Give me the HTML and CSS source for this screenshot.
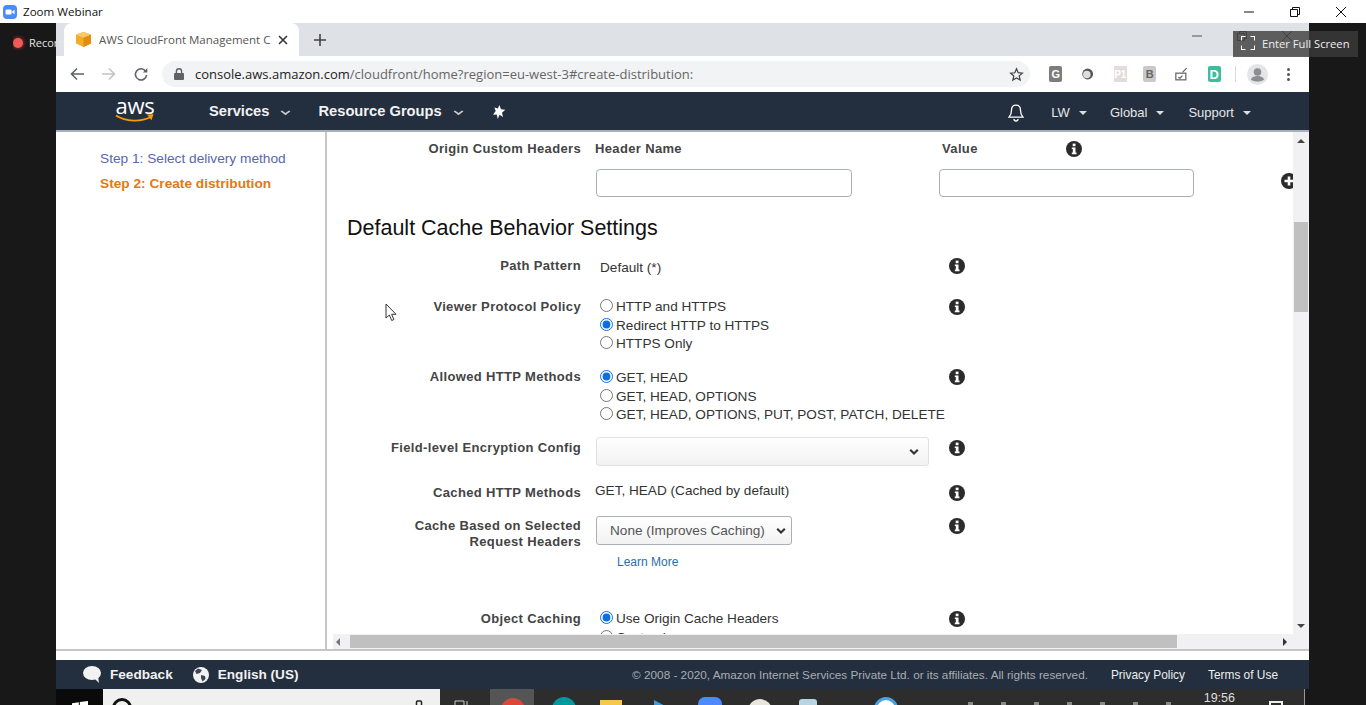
FILE: index.html
```html
<!DOCTYPE html>
<html lang="en">
<head>
  <meta charset="UTF-8" />
  <title>Zoom Webinar</title>
  <link rel="stylesheet" href="styles.css">
</head>
<body>
  <svg class="defs" width="0" height="0">
    <symbol id="info" viewBox="0 0 16 16">
      <circle cx="8" cy="8" r="8" fill="#2b2b2b"/>
      <rect x="6.7" y="2.6" width="2.8" height="2.6" fill="#fff"/>
      <path d="M5.8 6.4h3.7v5.2h1v1.6H5.8v-1.6h1V8h-1z" fill="#fff"/>
    </symbol>
    <symbol id="chev" viewBox="0 0 10 8">
      <path d="M1.2 1.8 5 5.6l3.8-3.8" fill="none" stroke="#333" stroke-width="2.1"/>
    </symbol>
  </svg>

  <header class="titlebar">
    <svg class="zoom-logo" width="14" height="14" viewBox="0 0 14 14"><rect width="14" height="14" rx="4" fill="#4a8cff"/><rect x="2.6" y="4.4" width="6" height="5.2" rx="1.2" fill="#fff"/><path d="m9.2 6.4 2.4-1.6v4.4L9.2 7.6z" fill="#fff"/></svg>
    <span class="titlebar-name">Zoom Webinar</span>
    <div class="winctl">
      <svg width="12" height="12" viewBox="0 0 12 12"><path d="M1 6h10" stroke="#111"/></svg>
      <svg width="12" height="12" viewBox="0 0 12 12"><path d="M1.5 3.5h7v7h-7zM3.5 3.5v-2h7v7h-2" fill="none" stroke="#111"/></svg>
      <svg width="12" height="12" viewBox="0 0 12 12"><path d="m1 1 10 10M11 1 1 11" stroke="#111"/></svg>
    </div>
  </header>

  <div class="desk">
    <div class="browser">
      <div class="tabstrip">
        <div class="tab">
          <svg width="15" height="15" viewBox="0 0 15 15"><path d="M7.5 0 15 2.6v9L7.5 15 0 11.6v-9z" fill="#f2ad2e"/><path d="M7.5 5.4 15 2.6v9L7.5 15z" fill="#e08e12"/><path d="M7.5 0 15 2.6 7.5 5.4 0 2.6z" fill="#f8cb6a"/></svg>
          <span class="tab-title">AWS CloudFront Management C</span>
          <svg class="tab-close" width="10" height="10" viewBox="0 0 10 10"><path d="m1 1 8 8M9 1 1 9" stroke="#333" stroke-width="1.6"/></svg>
        </div>
        <svg class="tab-new" width="12" height="12" viewBox="0 0 12 12"><path d="M6 0v12M0 6h12" stroke="#444" stroke-width="1.6"/></svg>
        <div class="strip-ctl">
          <svg width="10" height="10" viewBox="0 0 10 10"><path d="M0 5h10" stroke="#555"/></svg>
          <svg width="10" height="10" viewBox="0 0 10 10"><path d="M.5 2.5h7v7h-7zM2.5 2.5v-2h7v7h-2" fill="none" stroke="#555"/></svg>
          <svg width="10" height="10" viewBox="0 0 10 10"><path d="m0 0 10 10M10 0 0 10" stroke="#555"/></svg>
        </div>
      </div>

      <div class="toolbar">
        <svg class="tool-back" width="14" height="14" viewBox="0 0 14 14"><path d="M14 7H1.5M7 1.5 1.5 7 7 12.5" fill="none" stroke="#5f6368" stroke-width="1.6"/></svg>
        <svg class="tool-fwd" width="14" height="14" viewBox="0 0 14 14"><path d="M0 7h12.5M7 1.5 12.5 7 7 12.5" fill="none" stroke="#c2c4c7" stroke-width="1.6"/></svg>
        <svg class="tool-reload" width="14" height="14" viewBox="0 0 14 14"><path d="M11.8 4.4A5.6 5.6 0 1 0 12.6 8" fill="none" stroke="#5f6368" stroke-width="1.6"/><path d="M13.4 1v4.6H8.8z" fill="#5f6368"/></svg>
        <div class="omnibox">
          <svg width="10" height="12" viewBox="0 0 10 12"><rect y="5" width="10" height="7" rx="1" fill="#5f6368"/><path d="M2.4 5.5V3.4a2.6 2.6 0 0 1 5.2 0v2.1" fill="none" stroke="#5f6368" stroke-width="1.4"/></svg>
          <span class="url"><span class="url-host">console.aws.amazon.com</span>/cloudfront/home?region=eu-west-3#create-distribution:</span>
          <svg class="url-star" width="15" height="15" viewBox="0 0 24 24"><path d="m12 3 2.7 6.100 6.600.7-5 4.400 1.500 6.500L12 17.400l-5.800 3.400 1.500-6.500-5-4.400 6.600-.7z" fill="none" stroke="#444" stroke-width="2"/></svg>
        </div>
        <div class="exts">
          <span class="ext ext-g">G</span>
          <svg width="16" height="16" viewBox="0 0 16 16"><circle cx="8" cy="8" r="6.500" fill="#555"/><circle cx="7" cy="8.500" r="4.500" fill="#ddd"/></svg>
          <span class="ext ext-p">P1</span>
          <span class="ext ext-b">B</span>
          <svg width="16" height="16" viewBox="0 0 16 16"><rect x="1" y="7" width="12" height="8" fill="none" stroke="#666" stroke-width="1.500"/><path d="m4 12 2 1 3-3M9 6l5-5" fill="none" stroke="#666" stroke-width="1.500"/></svg>
          <span class="ext ext-d">D</span>
        </div>
        <span class="tool-sep"></span>
        <svg class="avatar" width="21" height="21" viewBox="0 0 21 21"><circle cx="10.500" cy="10.500" r="10.500" fill="#e4e5e7"/><circle cx="10.500" cy="8" r="3.800" fill="#8b8d90"/><path d="M3.800 15.500c1-2.800 4-3.600 6.700-3.600s5.700.8 6.700 3.600c-3.400 2.800-10 2.800-13.400 0z" fill="#8b8d90"/></svg>
        <div class="kebab"><i></i><i></i><i></i></div>
      </div>

      <nav class="awsnav">
        <div class="awslogo">
          <span class="awslogo-text">aws</span>
          <svg width="40" height="9" viewBox="0 0 40 9"><path d="M1 1.500c10 6.500 25 6.500 35 1.500" fill="none" stroke="#f90" stroke-width="1.800"/><path d="m32 .6 6.500-.4-2 6z" fill="#f90"/></svg>
        </div>
        <span class="nav-main nav-services">Services</span><span class="caret-main"></span>
        <span class="nav-main nav-groups">Resource Groups</span><span class="caret-main"></span>
        <svg class="nav-pin" width="14" height="14" viewBox="0 0 14 14"><path d="M7.400 0 9 4.300l4.300.5L10 7.700l1 4.300-3.500-2.300L5.800 14 4.700 9.500 1 9.700l2.700-3.600L2.400 2.600l3.500 1z" fill="#fff"/></svg>
        <svg class="nav-bell" width="16" height="18" viewBox="0 0 16 18"><path d="M8 1.200c-3 0-4.500 2.300-4.500 5 0 3.800-1 5.300-2.500 7h14c-1.500-1.700-2.500-3.200-2.500-7 0-2.700-1.500-5-4.500-5zM6 15a2 2 0 0 0 4 0" fill="none" stroke="#fff" stroke-width="1.300"/></svg>
        <span class="nav-sub nav-lw">LW</span><span class="caret caret-lw"></span>
        <span class="nav-sub nav-global">Global</span><span class="caret caret-global"></span>
        <span class="nav-sub nav-support">Support</span><span class="caret"></span>
      </nav>

      <div class="workspace">
        <aside class="steps">
          <a class="step">Step 1: Select delivery method</a>
          <a class="step step-on">Step 2: Create distribution</a>
        </aside>
        <div class="pane">
          <main class="scroller">
            <div class="origin-row">
              <div class="lbl">Origin Custom Headers</div>
              <div class="origin-col">
                <div class="origin-head">Header Name</div>
                <div class="textbox"></div>
              </div>
              <div class="origin-col origin-col-val">
                <div class="origin-head origin-head-val">Value <svg class="ico"><use href="#info"/></svg></div>
                <div class="textbox"></div>
              </div>
              <svg class="plus" width="16" height="16" viewBox="0 0 16 16"><circle cx="8" cy="8" r="8" fill="#2b2b2b"/><path d="M8 3.500v9M3.500 8h9" stroke="#fff" stroke-width="2.600"/></svg>
            </div>

            <h2>Default Cache Behavior Settings</h2>

            <div class="row row-path">
              <div class="lbl">Path Pattern</div>
              <div class="val val-path">Default (*)</div>
              <svg class="ico"><use href="#info"/></svg>
            </div>
            <div class="row row-viewer">
              <div class="lbl">Viewer Protocol Policy</div>
              <div class="val radios">
                <label><input type="radio" name="viewer">HTTP and HTTPS</label>
                <label><input type="radio" name="viewer" checked>Redirect HTTP to HTTPS</label>
                <label><input type="radio" name="viewer">HTTPS Only</label>
              </div>
              <svg class="ico"><use href="#info"/></svg>
            </div>
            <div class="row row-allowed">
              <div class="lbl">Allowed HTTP Methods</div>
              <div class="val radios">
                <label><input type="radio" name="allowed" checked>GET, HEAD</label>
                <label><input type="radio" name="allowed">GET, HEAD, OPTIONS</label>
                <label><input type="radio" name="allowed">GET, HEAD, OPTIONS, PUT, POST, PATCH, DELETE</label>
              </div>
              <svg class="ico"><use href="#info"/></svg>
            </div>
            <div class="row row-field">
              <div class="lbl">Field-level Encryption Config</div>
              <div class="val"><div class="select select-wide"><svg width="10" height="8"><use href="#chev"/></svg></div></div>
              <svg class="ico"><use href="#info"/></svg>
            </div>
            <div class="row row-cached">
              <div class="lbl">Cached HTTP Methods</div>
              <div class="val val-cached">GET, HEAD (Cached by default)</div>
              <svg class="ico"><use href="#info"/></svg>
            </div>
            <div class="row row-headers">
              <div class="lbl">Cache Based on Selected<br>Request Headers</div>
              <div class="val">
                <div class="select select-btn">None (Improves Caching)<svg width="10" height="8"><use href="#chev"/></svg></div>
                <a class="learn">Learn More</a>
              </div>
              <svg class="ico"><use href="#info"/></svg>
            </div>
            <div class="row row-object">
              <div class="lbl">Object Caching</div>
              <div class="val radios">
                <label><input type="radio" name="object" checked>Use Origin Cache Headers</label>
                <label><input type="radio" name="object">Customize</label>
              </div>
              <svg class="ico"><use href="#info"/></svg>
            </div>
          </main>
          <div class="vbar">
            <span class="arrow-up"></span>
            <span class="vbar-thumb"></span>
            <span class="arrow-down"></span>
          </div>
          <div class="hbar">
            <span class="arrow-left"></span>
            <span class="hbar-thumb"></span>
            <span class="arrow-right"></span>
          </div>
          <div class="corner"></div>
        </div>
      </div>

      <footer class="awsfoot">
        <svg class="foot-bubble" width="18" height="17" viewBox="0 0 18 17"><ellipse cx="9" cy="7" rx="9" ry="7" fill="#f2f2f2"/><path d="m11 12 5 5-1-7z" fill="#f2f2f2"/></svg>
        <span class="foot-strong">Feedback</span>
        <svg class="foot-globe" width="16" height="16" viewBox="0 0 16 16"><circle cx="8" cy="8" r="8" fill="#f2f2f2"/><path d="M5 1.500 9 3 7 6 3.500 7 2 4zM8 8l4 1 .5 3-3 2.500L8 11z" fill="#39465a"/></svg>
        <span class="foot-strong">English (US)</span>
        <span class="foot-copy">© 2008 - 2020, Amazon Internet Services Private Ltd. or its affiliates. All rights reserved.</span>
        <a class="foot-link">Privacy Policy</a>
        <a class="foot-link foot-terms">Terms of Use</a>
      </footer>

      <div class="taskbar">
        <div class="startbtn"><svg width="16" height="16" viewBox="0 0 16 16"><path d="M0 2.200 6.800 1.200V7.600H0zM7.800 1 16 0V7.600H7.800z" fill="#fff"/></svg></div>
        <div class="searchbox">
          <span class="search-ring"></span>
          <span class="search-hint">Type here to search</span>
          <svg class="search-mic" width="8" height="14" viewBox="0 0 8 14"><rect x="1.500" y="1" width="5" height="9" rx="1" fill="none" stroke="#222" stroke-width="1.500"/></svg>
        </div>
        <svg class="task-view" width="16" height="14" viewBox="0 0 16 14"><path d="M1 1h9v10H1zM13 1v10" fill="none" stroke="#ccc"/></svg>
        <div class="task-on"><span class="dot dot-chrome"></span></div>
        <span class="dot dot-teal"></span>
        <span class="folder"></span>
        <svg class="play" width="18" height="16" viewBox="0 0 18 16"><path d="M1 0 18 9 1 16z" fill="#3d9be0"/></svg>
        <span class="dot dot-zoom"></span>
        <span class="dot dot-paint"></span>
        <span class="dot dot-file"></span>
        <span class="dot dot-net"></span>
        <div class="tray">
          <div class="tray-glyphs"><i></i><i></i><i></i><i></i><i></i><i></i><i></i></div>
          <span class="tray-time">19:56</span>
          <span class="tray-note"></span>
        </div>
      </div>
    </div>
  </div>

  <div class="rec"><span class="rec-dot"></span>Recording</div>
  <div class="fullscreen">
    <svg width="14" height="14" viewBox="0 0 14 14"><path d="M0 4.500V0h4.500M9.500 0H14v4.500M14 9.500V14H9.500M4.500 14H0V9.500" fill="none" stroke="#fff" stroke-width="2"/></svg>
    Enter Full Screen
  </div>
  <svg class="cursor" width="13" height="19" viewBox="0 0 13 19"><path d="M1 1v14l3.400-3 2.300 5.500 2.200-1-2.300-5.200H11z" fill="#fff" stroke="#333"/></svg>
</body>
</html>
```

FILE: styles.css
```css
* {
  box-sizing: border-box;
}
html, body {
  margin: 0;
  height: 705px;
  overflow: hidden;
}
body {
  position: relative;
  background: #181818;
  font-family: "Liberation Sans", Arial, sans-serif;
  font-size: 14px;
  color: #333;
}
.defs {
  position: absolute;
}

/* zoom window */
.titlebar {
  height: 23px;
  background: #fff;
  display: flex;
  align-items: center;
  padding-left: 3px;
  color: #111;
}
.titlebar-name {
  margin-left: 6px;
  font-family: "Open Sans", sans-serif;
  font-size: 11.600px;
}
.winctl {
  margin-left: auto;
  margin-right: 19px;
  display: flex;
  gap: 34px;
}
.desk {
  height: 682px;
  padding-left: 56px;
}
.browser {
  width: 1253px;
  height: 682px;
  display: flex;
  flex-direction: column;
}

/* chrome */
.tabstrip {
  height: 33px;
  background: #dee1e6;
  display: flex;
  align-items: center;
  padding-left: 8px;
}
.tab {
  width: 235px;
  height: 33px;
  background: #fff;
  border-radius: 8px 8px 0 0;
  display: flex;
  align-items: center;
  padding-left: 12px;
}
.tab-title {
  width: 172px;
  margin-left: 8px;
  overflow: hidden;
  white-space: nowrap;
  font-family: "Open Sans", sans-serif;
  font-size: 11.500px;
  color: #555;
}
.tab-close {
  margin-left: 7px;
}
.tab-new {
  margin-left: 15px;
}
.strip-ctl {
  margin-left: auto;
  margin-right: 17px;
  margin-top: -8px;
  display: flex;
  gap: 35px;
}
.toolbar {
  height: 36px;
  background: #fff;
  display: flex;
  align-items: center;
  padding-left: 14px;
}
.tool-fwd {
  margin-left: 18px;
}
.tool-reload {
  margin-left: 18px;
}
.omnibox {
  width: 868px;
  height: 26px;
  margin-left: 14px;
  background: #f1f3f4;
  border-radius: 13px;
  display: flex;
  align-items: center;
  padding-left: 12px;
}
.url {
  margin-left: 11px;
  font-family: "Open Sans", sans-serif;
  font-size: 13px;
  color: #666;
  white-space: nowrap;
}
.url-host {
  color: #222;
}
.url-star {
  margin-left: auto;
  margin-right: 6px;
}
.exts {
  margin-left: 19px;
  display: flex;
  align-items: center;
  gap: 16px;
  width: 172px;
}
.exts svg {
  margin: 0 3px;
}
.ext {
  width: 16px;
  height: 16px;
  display: grid;
  place-items: center;
  font-size: 11px;
  font-weight: bold;
  color: #fff;
}
.ext-g {
  background: #7d7d7d;
  border-radius: 2px;
}
.ext-p {
  background: #e3dcdc;
  font-size: 10px;
}
.ext-b {
  background: #c9c9c9;
  color: #666;
  border-radius: 2px;
}
.ext-d {
  background: #3cbd9d;
  border-radius: 2px;
  font-size: 13px;
}
.tool-sep {
  width: 1px;
  height: 16px;
  background: #dcdcdc;
  margin-left: 14px;
}
.avatar {
  margin-left: 11px;
}
.kebab {
  margin-left: 19px;
  display: flex;
  flex-direction: column;
  gap: 2px;
}
.kebab i {
  width: 3px;
  height: 3px;
  background: #555;
  border-radius: 50%;
}

/* aws nav */
.awsnav {
  height: 40px;
  background: #232f3e;
  border-bottom: 2px solid #aab0b7;
  display: flex;
  align-items: center;
  color: #fff;
}
.awslogo {
  width: 40px;
  margin-left: 59px;
  display: flex;
  flex-direction: column;
  align-items: center;
  margin-top: -3px;
}
.awslogo-text {
  font-family: "Open Sans", sans-serif;
  font-size: 22px;
  line-height: 18px;
  letter-spacing: -.3px;
}
.nav-main {
  font-size: 14.700px;
  font-weight: bold;
  color: #f2f2f2;
}
.nav-services {
  margin-left: 54px;
}
.nav-groups {
  margin-left: 29px;
}
.caret-main {
  width: 7px;
  height: 7px;
  margin-left: 13px;
  margin-top: 1px;
  border-right: 2px solid #ccc;
  border-bottom: 2px solid #ccc;
  transform: scaleY(.7) rotate(45deg);
}
.nav-pin {
  margin-left: 30px;
  margin-top: 2px;
}
.nav-bell {
  margin-left: auto;
  margin-right: 27px;
  margin-top: 3px;
}
.nav-sub {
  font-size: 13px;
  color: #e6e6e6;
  margin-top: 3px;
}
.caret {
  width: 0;
  height: 0;
  margin-left: 9px;
  margin-top: 3px;
  border: 4px solid transparent;
  border-top: 4px solid #ddd;
  border-bottom: 0;
  margin-right: 58px;
}
.caret-lw {
  margin-right: 23px;
}
.caret-global {
  margin-right: 24px;
}

/* main area */
.workspace {
  flex: 1;
  min-height: 0;
  display: flex;
  background: #fff;
  padding-bottom: 9px;
}
.steps {
  width: 271px;
  border-right: 2px solid #c6c6c6;
  border-bottom: 2px solid #c6c6c6;
  padding: 19px 0 0 44px;
  display: flex;
  flex-direction: column;
  gap: 9px;
}
.step {
  color: #5a66ad;
  font-size: 13.700px;
  line-height: 16px;
}
.step-on {
  color: #e47911;
  font-weight: bold;
}
.pane {
  flex: 1;
  min-width: 0;
  display: grid;
  grid-template-columns: 1fr 16px;
  grid-template-rows: 1fr 15px;
  border-bottom: 2px solid #c6c6c6;
}
.scroller {
  overflow: hidden;
  position: relative;
  min-width: 0;
  min-height: 0;
  padding-top: 9px;
}
.vbar {
  background: #f1f1f3;
  position: relative;
}
.vbar-thumb {
  position: absolute;
  left: 1px;
  right: 1px;
  top: 90px;
  height: 90px;
  background: #c0c0c0;
}
.arrow-up,
.arrow-down {
  position: absolute;
  left: 4px;
  border: 4px solid transparent;
  border-top: 0;
  border-bottom: 4px solid #444;
}
.arrow-up {
  top: 7px;
}
.arrow-down {
  bottom: 6px;
  border-bottom: 0;
  border-top: 4px solid #444;
}
.hbar {
  background: #f1f1f3;
  margin-left: 6px;
  position: relative;
}
.hbar-thumb {
  position: absolute;
  left: 17px;
  width: 827px;
  top: 1px;
  bottom: 1px;
  background: #c0c0c0;
}
.arrow-left,
.arrow-right {
  position: absolute;
  top: 4px;
  border: 4px solid transparent;
}
.arrow-left {
  left: 3px;
  border-left: 0;
  border-right: 4px solid #777;
}
.arrow-right {
  right: 6px;
  border-right: 0;
  border-left: 4px solid #333;
}
.corner {
  background: #f1f1f3;
}

/* form rows */
.lbl {
  width: 254px;
  text-align: right;
  font-weight: bold;
  font-size: 13px;
  letter-spacing: .35px;
  line-height: 16px;
  color: #444;
  flex: none;
}
.origin-row {
  display: flex;
  height: 59px;
  position: relative;
}
.origin-col {
  margin-left: 15px;
  width: 256px;
}
.origin-col-val {
  margin-left: 87px;
  width: 255px;
}
.origin-head {
  font-weight: bold;
  font-size: 13px;
  letter-spacing: .35px;
  line-height: 16px;
  color: #444;
  margin-left: -1px;
  margin-bottom: 12px;
  height: 16px;
  display: flex;
  align-items: center;
}
.origin-head-val {
  margin-left: 3px;
}
.origin-head .ico {
  margin-left: 88px;
}
.textbox {
  height: 28px;
  border: 1px solid #aab0b5;
  border-radius: 4px;
  background: #fff;
}
.plus {
  position: absolute;
  left: 954px;
  top: 32px;
}
h2 {
  margin: 0 0 0 20px;
  height: 58px;
  padding-top: 15px;
  font-weight: normal;
  font-size: 21.500px;
  line-height: 26px;
  color: #111;
}
.ico {
  width: 16px;
  height: 16px;
  flex: none;
}
.row {
  display: flex;
  position: relative;
}
.val {
  width: 353px;
  margin-left: 15px;
  flex: none;
  line-height: 18px;
  font-size: 13.600px;
  color: #333;
}
.row-path {
  height: 41px;
}
.val-path {
  padding-left: 4px;
  padding-top: 1px;
}
.row-viewer {
  height: 70px;
}
.row-allowed {
  height: 71px;
}
.row-field {
  height: 45px;
}
.row-cached {
  height: 33px;
}
.row-headers {
  height: 93px;
}
.row-object {
  height: 40px;
}
.val-cached {
  margin-top: -3px;
  margin-left: 14px;
  width: 354px;
}
.radios {
  padding-left: 4px;
  margin-top: -1px;
}
.row-allowed .radios {
  margin-top: 0;
}
.radios label {
  display: flex;
  align-items: center;
  height: 18.500px;
  white-space: nowrap;
}
.radios input {
  width: 13px;
  height: 13px;
  margin: -3px 3px 0 0;
  accent-color: #0b6fe0;
  flex: none;
}
.select {
  border: 1px solid #e0e0e0;
  border-radius: 3px;
  background: linear-gradient(#fff, #f2f2f2);
  display: flex;
  align-items: center;
  justify-content: flex-end;
}
.select-wide {
  width: 333px;
  height: 29px;
  margin-top: -3px;
  padding-right: 9px;
}
.select-btn {
  width: 196px;
  height: 29px;
  border-color: #aab0b5;
  justify-content: space-between;
  padding: 0 5px 0 13px;
  color: #555;
  margin-top: -2px;
  white-space: nowrap;
}
.learn {
  display: block;
  margin: 9px 0 0 21px;
  font-size: 12px;
  line-height: 16px;
  color: #2a6ea8;
}

/* aws footer */
.awsfoot {
  height: 29px;
  background: #232f3e;
  display: flex;
  align-items: center;
  color: #fff;
}
.foot-bubble {
  margin-left: 27px;
}
.foot-strong {
  font-weight: bold;
  font-size: 13.600px;
  color: #f2f2f2;
  margin-left: 9px;
}
.foot-globe {
  margin-left: 20px;
}
.foot-copy {
  margin-left: auto;
  font-size: 11.760px;
  color: #a9adb3;
}
.foot-link {
  margin-left: 23px;
  font-size: 11.900px;
  color: #eee;
}
.foot-terms {
  margin-right: 31px;
}

/* windows taskbar, only its top edge is on screen */
.taskbar {
  height: 16px;
  width: 1249px;
  background: #2d2d2d;
  border-right: 1px solid #999;
  display: flex;
  align-items: flex-start;
  overflow: hidden;
}
.startbtn {
  width: 47px;
  height: 16px;
  background: #0a0a0a;
  padding: 12px 0 0 16px;
  flex: none;
}
.searchbox {
  width: 337px;
  height: 16px;
  background: #f0f0f0;
  display: flex;
  padding-left: 9px;
  flex: none;
}
.search-ring {
  width: 20px;
  height: 20px;
  margin-top: 9px;
  border: 3px solid #111;
  border-radius: 50%;
  flex: none;
}
.search-hint {
  margin-left: 10px;
  margin-top: 13px;
  font-size: 13px;
  color: #555;
  white-space: nowrap;
}
.search-mic {
  margin-left: auto;
  margin-right: 17px;
  margin-top: 11px;
}
.task-view {
  margin: 11px 0 0 14px;
  flex: none;
}
.task-on {
  width: 44px;
  height: 16px;
  margin-left: 20px;
  background: #555;
  padding: 9px 0 0 11px;
  flex: none;
}
.dot {
  width: 24px;
  height: 24px;
  border-radius: 50%;
  display: block;
  flex: none;
}
.dot-chrome {
  background: #d9483b;
}
.dot-teal {
  margin: 8px 0 0 18px;
  background: #00979d;
}
.folder {
  width: 22px;
  height: 16px;
  margin: 11px 0 0 24px;
  background: #f5c84c;
  flex: none;
}
.play {
  margin: 11px 0 0 31px;
  flex: none;
}
.dot-zoom {
  margin: 8px 0 0 27px;
  background: #4a8cff;
  border-radius: 7px;
}
.dot-paint {
  margin: 10px 0 0 26px;
  background: #e8e6dc;
}
.dot-file {
  margin: 10px 0 0 27px;
  width: 18px;
  background: #b8d4e0;
  border-radius: 3px;
}
.dot-net {
  margin: 8px 0 0 57px;
  border: 3px solid #4aa3df;
  background: #fff;
}
.tray {
  margin-left: auto;
  display: flex;
  align-items: flex-start;
}
.tray-glyphs {
  display: flex;
  gap: 28px;
  margin: 13px 33px 0 0;
}
.tray-glyphs i {
  width: 5px;
  height: 3px;
  background: #8a8a8a;
}
.tray-time {
  margin-top: 3px;
  font-size: 12.500px;
  line-height: 13px;
  color: #ddd;
}
.tray-note {
  width: 14px;
  height: 14px;
  margin: 12px 21px 0 34px;
  border: 2px solid #eee;
}

/* things on top of the browser */
.rec {
  position: absolute;
  left: 13px;
  top: 35px;
  width: 51px;
  overflow: hidden;
  white-space: nowrap;
  display: flex;
  align-items: center;
  gap: 6px;
  font-family: "Open Sans", sans-serif;
  font-size: 11px;
  color: #e6e6e6;
}
.rec-dot {
  width: 10px;
  height: 10px;
  border-radius: 50%;
  background: #f25b55;
  box-shadow: 0 0 4px #e0352c;
  flex: none;
}
.fullscreen {
  position: absolute;
  left: 1233px;
  top: 31px;
  width: 125px;
  height: 26px;
  background: rgba(60, 60, 60, .8);
  display: flex;
  align-items: center;
  gap: 7px;
  padding-left: 8px;
  padding-bottom: 2px;
  font-family: "Open Sans", sans-serif;
  font-size: 11.200px;
  white-space: nowrap;
  color: #eee;
}
.cursor {
  position: absolute;
  left: 385px;
  top: 303px;
}
```
